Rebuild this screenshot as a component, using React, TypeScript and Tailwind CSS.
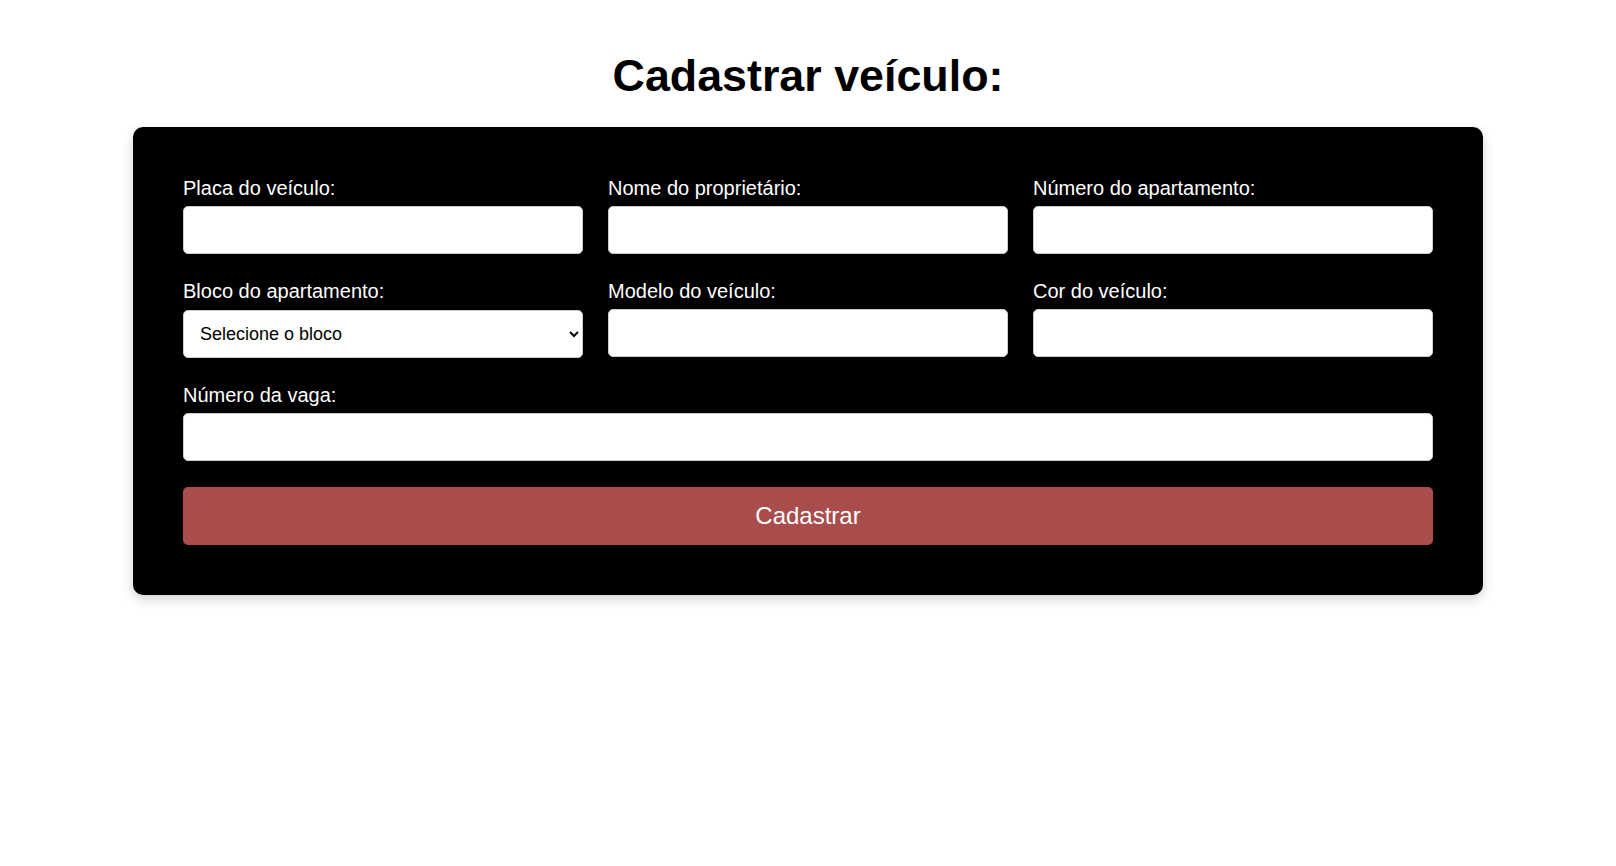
import { useState } from "react"

const campos = [
  { id: "placa", label: "Placa do veículo:" },
  { id: "proprietario", label: "Nome do proprietário:" },
  { id: "apartamento", label: "Número do apartamento:" },
]

const campos2 = [
  { id: "modelo", label: "Modelo do veículo:" },
  { id: "cor", label: "Cor do veículo:" },
]

const inputClass =
  "block w-full h-[48px] px-3 bg-white text-black text-[18px] border border-[#cccccc] rounded-[5px] outline-none"

function Campo({ id, label, className = "" }: { id: string; label: string; className?: string }) {
  return (
    <div className={className}>
      <label htmlFor={id} className="block text-white text-[20px] leading-[23px] mb-[6px]">
        {label}
      </label>
      <input id={id} type="text" className={inputClass} />
    </div>
  )
}

export default function App() {
  const [bloco, setBloco] = useState("")

  return (
    <div className="min-h-screen bg-white pt-[50px] font-['Liberation_Sans',Arial,sans-serif]">
      <h1 className="text-center text-black font-bold text-[44.8px] leading-[51px] mb-[26px]">
        Cadastrar veículo:
      </h1>

      <form
        onSubmit={(e) => e.preventDefault()}
        className="w-[1350px] mx-auto bg-black rounded-[10px] p-[50px] shadow-[0_4px_12px_rgba(0,0,0,0.18)]"
      >
        <div className="grid grid-cols-3 gap-x-[25px] gap-y-[26px]">
          {campos.map((c) => (
            <Campo key={c.id} id={c.id} label={c.label} />
          ))}

          <div>
            <label htmlFor="bloco" className="block text-white text-[20px] leading-[23px] mb-[7px]">
              Bloco do apartamento:
            </label>
            <select
              id="bloco"
              value={bloco}
              onChange={(e) => setBloco(e.target.value)}
              className="block w-full h-[48px] pl-3 pr-1 bg-white text-black text-[18px] border border-[#cccccc] rounded-[5px] outline-none"
            >
              <option value="">Selecione o bloco</option>
              <option value="A">Bloco A</option>
              <option value="B">Bloco B</option>
              <option value="C">Bloco C</option>
            </select>
          </div>

          {campos2.map((c) => (
            <Campo key={c.id} id={c.id} label={c.label} />
          ))}

          <Campo id="vaga" label="Número da vaga:" className="col-span-3" />
        </div>

        <button
          type="submit"
          className="mt-[26px] block w-full h-[58px] bg-[#a94c4c] text-white text-[24px] rounded-[5px] cursor-pointer"
        >
          Cadastrar
        </button>
      </form>
    </div>
  )
}
